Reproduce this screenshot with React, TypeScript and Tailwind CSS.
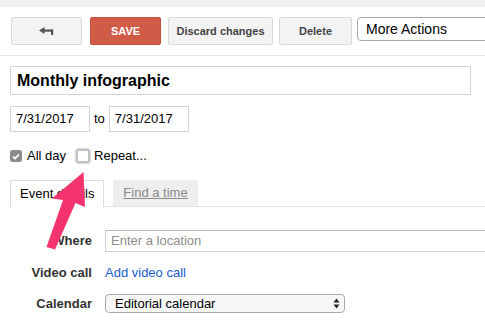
import React from "react";

const btn =
  "shrink-0 h-[28px] flex items-center justify-center rounded-[2px] border border-[#d9d9d9] bg-[#f3f3f3] text-[11px] font-bold text-[#444]";

export default function App() {
  return (
    <div className="relative w-[485px] h-[322px] overflow-hidden bg-white font-['Liberation_Sans',Arial,sans-serif] text-black">
      <div className="h-[7px] bg-[#f1f1f1]" />
      {/* toolbar */}
      <div className="flex items-start pt-[10px] pl-[11px]">
        <div className={`${btn} w-[71px]`}>
          <svg width="15" height="9" viewBox="0 0 15 9">
            <polygon points="0,3.5 5.5,0 5.5,7" fill="#555" />
            <rect x="5" y="2.5" width="9" height="2.2" fill="#555" />
            <rect x="12" y="2.5" width="2.2" height="5.5" fill="#555" />
          </svg>
        </div>
        <div className="shrink-0 ml-[8px] h-[28px] w-[71px] flex items-center justify-center rounded-[2px] border border-[#c4503e] bg-[#d05b47] text-[11px] font-bold text-white">
          SAVE
        </div>
        <div className={`${btn} ml-[7px] w-[105px]`}>Discard changes</div>
        <div className={`${btn} ml-[6px] w-[73px]`}>Delete</div>
        <div className="ml-[5px] h-[24px] w-[140px] shrink-0 flex items-center rounded-[4px] border border-[#a9a9a9] bg-white pl-[8px] text-[14px] text-black">
          More Actions
        </div>
      </div>
      <div className="mt-[10px] h-px bg-[#e6e6e6]" />
      {/* title */}
      <div className="mt-[10px] ml-[10px] h-[29px] w-[461px] flex items-center border border-[#d4d4d4] pl-[6px] text-[16px] font-bold">
        Monthly infographic
      </div>
      {/* dates */}
      <div className="mt-[11px] ml-[10px] flex items-center">
        <div className="h-[26px] w-[80px] flex items-center border border-[#d4d4d4] pl-[5px] text-[13px]">7/31/2017</div>
        <span className="ml-[4px] mr-[4px] text-[13px]">to</span>
        <div className="h-[26px] w-[80px] flex items-center border border-[#d4d4d4] pl-[5px] text-[13px]">7/31/2017</div>
      </div>
      {/* checkboxes */}
      <div className="mt-[16px] ml-[10px] h-[16px] flex items-center text-[13px]">
        <div className="w-[12px] h-[12px] rounded-[2px] bg-[#8c8c8c] flex items-center justify-center">
          <svg width="8" height="7" viewBox="0 0 8 7">
            <path d="M1 3.6 L3.1 5.6 L7 1.2" stroke="white" strokeWidth="1.6" fill="none" />
          </svg>
        </div>
        <span className="ml-[5px]">All day</span>
        <div className="ml-[10px] w-[14px] h-[14px] rounded-[3px] border-[2px] border-[#c2c2c2] bg-white shadow-[0_0_1px_1px_#d6d6d6]" />
        <span className="ml-[4px]">Repeat...</span>
      </div>
      {/* tabs */}
      <div className="mt-[16px] ml-[10px] flex items-end border-b border-[#e0e0e0] h-[27px]">
        <div className="shrink-0 h-[27px] w-[94px] -mb-px bg-white border border-b-0 border-[#dcdcdc] flex items-center pl-[9px] text-[13px]">
          Event details
        </div>
        <div className="shrink-0 ml-[9px] h-[26px] w-[85px] self-start bg-[#eeeeee] flex items-center justify-center text-[13px] text-[#8a8a8a] underline">
          Find a time
        </div>
      </div>
      {/* where */}
      <div className="mt-[23px] ml-[10px] flex items-center">
        <div className="shrink-0 w-[82px] text-right text-[13px] font-bold text-[#333]">Where</div>
        <div className="ml-[13px] h-[22px] w-[400px] shrink-0 flex items-center border border-[#d0d0d0] border-t-[#b9b9b9] pl-[5px] text-[13px] text-[#8e8e8e]">
          Enter a location
        </div>
      </div>
      <div className="mt-[13px] ml-[10px] h-[16px] flex items-center">
        <div className="shrink-0 w-[82px] text-right text-[13px] font-bold text-[#333]">Video call</div>
        <div className="ml-[13px] text-[13px] text-[#1a5ccf]">Add video call</div>
      </div>
      <div className="mt-[13px] ml-[10px] flex items-center">
        <div className="shrink-0 w-[82px] text-right text-[13px] font-bold text-[#333]">Calendar</div>
        <div className="shrink-0 ml-[13px] h-[19px] w-[240px] flex items-center justify-between rounded-[4px] border border-[#a9a9a9] bg-[#f7f7f7] pl-[9px] pr-[4px] text-[13px] text-black">
          <span>Editorial calendar</span>
          <svg width="7" height="11" viewBox="0 0 7 11">
            <polygon points="3.5,0.5 6.5,4.5 0.5,4.5" fill="#222" />
            <polygon points="0.5,6.5 6.5,6.5 3.5,10.5" fill="#222" />
          </svg>
        </div>
      </div>
      {/* annotation arrow */}
      <svg className="absolute left-0 top-0" width="485" height="322" viewBox="0 0 485 322">
        <polygon
          points="83.5,172 85,207 75.5,203 55,249.5 46.5,247 63,200 52,198.5"
          fill="#f5336f"
        />
      </svg>
    </div>
  );
}
